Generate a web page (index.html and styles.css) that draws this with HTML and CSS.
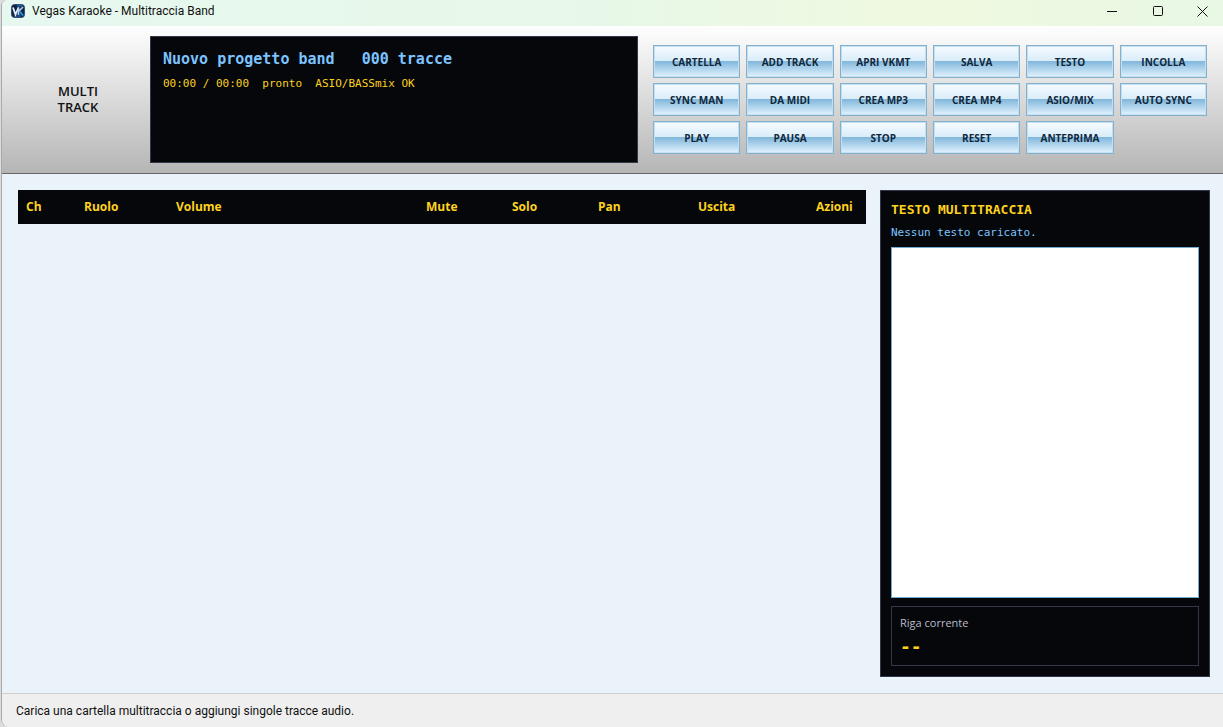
FILE: index.html
```html
<!DOCTYPE html>
<html lang="it">
<head>
    <meta charset="UTF-8">
    <meta name="viewport" content="width=device-width, initial-scale=1.0">
    <title>Vegas Karaoke - Multitraccia Band</title>
    <link rel="stylesheet" href="styles.css">
</head>
<body>
    <div class="window">
        <div class="titlebar">
            <svg class="logo" width="14" height="14" viewBox="0 0 14 14">
                <rect x="0.5" y="0.5" width="13" height="13" rx="3" fill="#102447" stroke="#3c4c6b"/>
                <path d="M6 1.8h5M3 12h7" stroke="#1778c8" stroke-width="1.2"/>
                <path d="M2 3.5l2.5 7L7.5 3.5" fill="none" stroke="#e4edf8" stroke-width="1.8"/>
                <path d="M7.5 3.5v7.5M12 3L8 7" fill="none" stroke="#b9d7f5" stroke-width="1.6"/>
                <path d="M8.5 7l3.5 4.5" stroke="#2497ed" stroke-width="1.8"/>
            </svg>
            <span class="title">Vegas Karaoke - Multitraccia Band</span>
            <div class="controls">
                <button type="button" aria-label="Riduci">
                    <svg width="11" height="11" viewBox="0 0 11 11"><path d="M0 5.5h10"/></svg>
                </button>
                <button type="button" aria-label="Ingrandisci">
                    <svg width="11" height="11" viewBox="0 0 11 11"><rect x="0.5" y="0.5" width="9" height="9" rx="1"/></svg>
                </button>
                <button type="button" aria-label="Chiudi">
                    <svg width="11" height="11" viewBox="0 0 11 11"><path d="M0.5 0.5l10 10M10.5 0.5l-10 10"/></svg>
                </button>
            </div>
        </div>

        <header class="header">
            <div class="brand">MULTI<br>TRACK</div>
            <div class="display">
                <div class="project">Nuovo progetto band   000 tracce</div>
                <div class="state">00:00 / 00:00  pronto  ASIO/BASSmix OK</div>
            </div>
            <div class="buttons">
                <button type="button">CARTELLA</button>
                <button type="button">ADD TRACK</button>
                <button type="button">APRI VKMT</button>
                <button type="button">SALVA</button>
                <button type="button">TESTO</button>
                <button type="button">INCOLLA</button>
                <button type="button">SYNC MAN</button>
                <button type="button">DA MIDI</button>
                <button type="button">CREA MP3</button>
                <button type="button">CREA MP4</button>
                <button type="button">ASIO/MIX</button>
                <button type="button">AUTO SYNC</button>
                <button type="button">PLAY</button>
                <button type="button">PAUSA</button>
                <button type="button">STOP</button>
                <button type="button">RESET</button>
                <button type="button">ANTEPRIMA</button>
            </div>
        </header>

        <main class="main">
            <div class="tracks">
                <table>
                    <thead>
                        <tr>
                            <th class="ch">Ch</th>
                            <th class="role">Ruolo</th>
                            <th>Volume</th>
                            <th class="toggle">Mute</th>
                            <th class="toggle">Solo</th>
                            <th class="pan">Pan</th>
                            <th class="output">Uscita</th>
                            <th class="ch">Azioni</th>
                        </tr>
                    </thead>
                </table>
            </div>
            <aside class="lyrics">
                <label class="lyrics-title" for="testo">TESTO MULTITRACCIA</label>
                <div class="lyrics-state">Nessun testo caricato.</div>
                <textarea id="testo"></textarea>
                <div class="current">
                    <div class="current-label">Riga corrente</div>
                    <div class="current-line">--</div>
                </div>
            </aside>
        </main>

        <footer class="status">Carica una cartella multitraccia o aggiungi singole tracce audio.</footer>
    </div>
</body>
</html>
```
FILE: styles.css
```css
* {
    box-sizing: border-box;
}
body {
    margin: 0;
    background: #dcdcdc;
    font-family: "Segoe UI", "Open Sans", sans-serif;
    font-size: 12px;
    line-height: 16px;
    color: #111;
}
button {
    font-family: inherit;
    margin: 0;
}
.window {
    display: flex;
    flex-direction: column;
    min-height: 100vh;
    margin-left: 1px;
    border-left: 1px solid #a9a9a9;
    border-radius: 6px 0 0 8px;
    background: #eaf2fa;
    overflow: hidden;
}

/* title bar */
.titlebar {
    display: flex;
    align-items: center;
    height: 26px;
    padding: 0 0 4px 9px;
    gap: 7px;
    background: linear-gradient(90deg, #e6f8f0, #e8f8e8 50%, #eff9df 76%, #e8f8e5);
}
.title {
    flex: 1;
}
.title, .status {
    font-family: "Segoe UI", Roboto, sans-serif;
}
.controls {
    display: flex;
}
.controls button {
    display: flex;
    align-items: center;
    justify-content: center;
    width: 46px;
    height: 20px;
    padding: 0;
    border: 0;
    background: none;
}
.controls button:last-child {
    width: 42px;
}
.controls svg {
    fill: none;
    stroke: #111;
}

/* header */
.header {
    display: grid;
    grid-template-columns: 132px 1fr 554px;
    column-gap: 15px;
    height: 148px;
    padding: 10px 16px 10px 0;
    background: linear-gradient(#fff, #b5b5b5);
    border-bottom: 1px solid #68686c;
}
.brand {
    padding: 47px 0 0 20px;
    text-align: center;
    font-size: 13px;
    font-weight: 600;
}
.display {
    margin-left: 1px;
    padding: 12px;
    background: #05070b;
    border: 1px solid #34364a;
    font-family: Consolas, "DejaVu Sans Mono", monospace;
    overflow: hidden;
}
.project, .state {
    white-space: pre;
}
.project {
    font-size: 15px;
    line-height: 20px;
    font-weight: bold;
    color: #7cc4ff;
}
.state {
    margin-top: 7px;
    font-size: 11px;
    color: #ffd21f;
}
.buttons {
    display: grid;
    grid-template-columns: repeat(6, 1fr);
    grid-auto-rows: 33px;
    gap: 5px 6px;
    align-content: center;
}
.buttons button {
    padding: 0;
    border: 1px solid #82b0cd;
    box-shadow: inset 0 0 0 1px #c5dfef;
    background: linear-gradient(#f7fbff, #d9edf9 47%, #7fb5da 48%, #e2f3ff);
    font-size: 10px;
    font-weight: bold;
    color: #10273c;
}

/* content */
.main {
    flex: 1;
    display: grid;
    grid-template-columns: 1fr 330px;
    gap: 14px;
    padding: 16px 13px 16px 16px;
}
.tracks table {
    width: 100%;
    table-layout: fixed;
    border-collapse: collapse;
    background: #05070b;
}
.tracks th {
    height: 34px;
    padding: 0 8px;
    text-align: left;
    font-size: 12px;
    color: #ffd21f;
}
.tracks .ch {
    width: 58px;
}
.tracks .role {
    width: 92px;
}
.tracks .toggle {
    width: 86px;
}
.tracks .pan {
    width: 100px;
}
.tracks .output {
    width: 118px;
}

/* lyrics */
.lyrics {
    display: flex;
    flex-direction: column;
    padding: 11px 10px 10px;
    background: #05070b;
    border: 1px solid #34364a;
    font-family: Consolas, "DejaVu Sans Mono", monospace;
}
.lyrics-title {
    font-size: 13px;
    font-weight: bold;
    color: #ffd21f;
}
.lyrics-state {
    margin: 7px 0 6px;
    font-size: 11px;
    color: #7cc4ff;
}
.lyrics textarea {
    flex: 1;
    padding: 8px;
    border: 1px solid #72abd0;
    background: #fff;
    resize: none;
    outline: none;
}
.current {
    height: 60px;
    margin-top: 8px;
    padding: 8px;
    border: 1px solid #34364a;
}
.current-label {
    font-family: "Segoe UI", "Open Sans", sans-serif;
    font-size: 11px;
    color: #b9bdc9;
}
.current-line {
    margin-top: 8px;
    font-size: 18px;
    font-weight: bold;
    color: #ffd21f;
}

.status {
    height: 34px;
    padding: 9px 14px;
    border-top: 1px solid #d0d0d0;
    background: #efefef;
}
```
